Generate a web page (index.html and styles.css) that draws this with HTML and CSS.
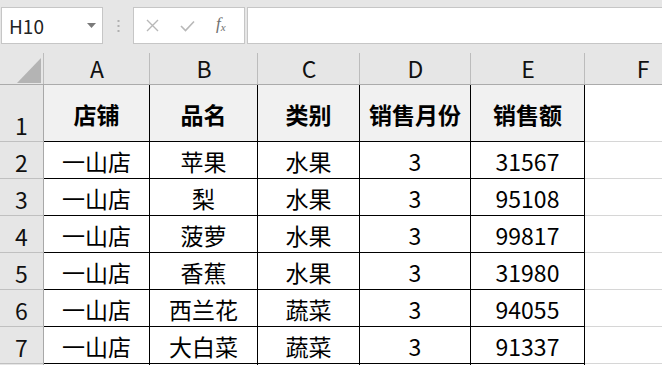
FILE: index.html
```html
<!DOCTYPE html>
<html lang="zh-CN">
<head>
  <meta charset="UTF-8">
  <meta name="viewport" content="width=device-width, initial-scale=1.0">
  <title>销售表</title>
  <link rel="stylesheet" href="styles.css">
</head>
<body>
  <div class="toolbar">
    <div class="namebox">
      <span>H10</span>
      <svg class="drop" width="9" height="5" viewBox="0 0 9 5"><polygon points="0,0 9,0 4.5,5" fill="#7a7a7a"/></svg>
    </div>
    <div class="grip">
      <svg width="3" height="12" viewBox="0 0 3 12"><rect x="0.5" y="0" width="2" height="2" fill="#b0b0b0"/><rect x="0.5" y="5" width="2" height="2" fill="#b0b0b0"/><rect x="0.5" y="10" width="2" height="2" fill="#b0b0b0"/></svg>
    </div>
    <div class="fx-box">
      <svg width="13" height="13" viewBox="0 0 13 13"><path d="M1 1 L12 12 M12 1 L1 12" stroke="#b8b8b8" stroke-width="1.4" fill="none"/></svg>
      <svg width="15" height="12" viewBox="0 0 15 12"><path d="M1 6 L5.5 10.5 L14 1.5" stroke="#b8b8b8" stroke-width="1.6" fill="none"/></svg>
      <span class="fx">f<sub>x</sub></span>
    </div>
    <div class="formula"></div>
  </div>

  <div class="sheet">
    <div class="corner">
      <svg width="24" height="25" viewBox="0 0 24 25"><polygon points="24,0 24,25 0,25" fill="#b4b4b4"/></svg>
    </div>
    <div class="ch">A</div>
    <div class="ch">B</div>
    <div class="ch">C</div>
    <div class="ch">D</div>
    <div class="ch">E</div>
    <div class="ch last">F</div>

    <div class="rh">1</div>
    <div class="cell head">店铺</div>
    <div class="cell head">品名</div>
    <div class="cell head">类别</div>
    <div class="cell head">销售月份</div>
    <div class="cell head">销售额</div>
    <div class="blank"></div>

    <div class="rh">2</div>
    <div class="cell">一山店</div>
    <div class="cell">苹果</div>
    <div class="cell">水果</div>
    <div class="cell">3</div>
    <div class="cell">31567</div>
    <div class="blank"></div>

    <div class="rh">3</div>
    <div class="cell">一山店</div>
    <div class="cell">梨</div>
    <div class="cell">水果</div>
    <div class="cell">3</div>
    <div class="cell">95108</div>
    <div class="blank"></div>

    <div class="rh">4</div>
    <div class="cell">一山店</div>
    <div class="cell">菠萝</div>
    <div class="cell">水果</div>
    <div class="cell">3</div>
    <div class="cell">99817</div>
    <div class="blank"></div>

    <div class="rh">5</div>
    <div class="cell">一山店</div>
    <div class="cell">香蕉</div>
    <div class="cell">水果</div>
    <div class="cell">3</div>
    <div class="cell">31980</div>
    <div class="blank"></div>

    <div class="rh">6</div>
    <div class="cell">一山店</div>
    <div class="cell">西兰花</div>
    <div class="cell">蔬菜</div>
    <div class="cell">3</div>
    <div class="cell">94055</div>
    <div class="blank"></div>

    <div class="rh">7</div>
    <div class="cell">一山店</div>
    <div class="cell">大白菜</div>
    <div class="cell">蔬菜</div>
    <div class="cell">3</div>
    <div class="cell">91337</div>
    <div class="blank"></div>

    <!-- next row, only its top edge shows -->
    <div class="rh"></div>
    <div class="cell"></div>
    <div class="cell"></div>
    <div class="cell"></div>
    <div class="cell"></div>
    <div class="cell"></div>
    <div class="blank"></div>
  </div>
</body>
</html>
```

FILE: styles.css
```css
* {
  box-sizing: border-box;
  margin: 0;
  padding: 0;
}

body {
  font-family: "Noto Sans CJK SC", "Noto Sans", sans-serif;
  background: #fff;
  color: #000;
  width: 662px;
  height: 365px;
  overflow: hidden;
}

/* name box + formula bar */
.toolbar {
  height: 44px;
  background: #e6e6e6;
  padding-top: 7px;
  display: flex;
}

.namebox {
  width: 102px;
  margin-left: 1px;
  height: 37px;
  background: #fff;
  border: 1px solid #c6c6c6;
  display: flex;
  align-items: center;
  justify-content: space-between;
  padding: 0 6px 0 7px;
  font-size: 19px;
  color: #222;
}

.namebox span {
  line-height: 1;
}

.grip {
  width: 30px;
  display: flex;
  align-items: center;
  justify-content: center;
  padding-left: 1px;
}

.fx-box {
  width: 112px;
  height: 37px;
  background: #fff;
  border: 1px solid #c6c6c6;
  display: flex;
  align-items: center;
  padding-left: 12px;
  gap: 21px;
}

.fx {
  font-family: "Liberation Serif", serif;
  font-style: italic;
  font-size: 17px;
  color: #6f6f6f;
  line-height: 1;
  margin-top: -3px;
}

.fx sub {
  font-size: 11px;
  vertical-align: -2px;
}

.formula {
  flex: 1;
  height: 37px;
  margin-left: 2px;
  background: #fff;
  border: 1px solid #c6c6c6;
  border-right: none;
}

/* grid */
.sheet {
  display: grid;
  grid-template-columns: 44px 106px 108px 102px 111px 114px 116px;
  grid-template-rows: 41px 57px repeat(7, 37px) 20px;
  font-size: 23px;
  height: 321px;
  overflow: hidden;
}

.corner,
.ch {
  background: #e6e6e6 linear-gradient(#bcbcbc, #bcbcbc) right bottom / 1px 31px no-repeat;
  border-bottom: 1px solid #ababab;
}

.corner {
  display: flex;
  align-items: flex-end;
  justify-content: flex-end;
  padding: 0 3px 1px 0;
}

.ch {
  display: flex;
  align-items: flex-end;
  justify-content: center;
  line-height: 1;
  padding-bottom: 4px;
  font-size: 23px;
  color: #111;
}

.ch.last {
  background-image: none;
}

.rh {
  background: #e6e6e6;
  border-right: 1px solid #a8a8a8;
  border-bottom: 1px solid #c0c0c0;
  display: flex;
  align-items: flex-end;
  justify-content: center;
  line-height: 1;
  padding-bottom: 4px;
  color: #111;
}

.cell {
  border-right: 1px solid #000;
  border-bottom: 1px solid #000;
  display: flex;
  align-items: center;
  justify-content: center;
  padding-top: 3px;
  line-height: 1;
  white-space: nowrap;
}

.cell.head {
  background: #f1f1f1;
  font-weight: 700;
}

.blank {
  border-bottom: 1px solid #d6d6d6;
}
```
